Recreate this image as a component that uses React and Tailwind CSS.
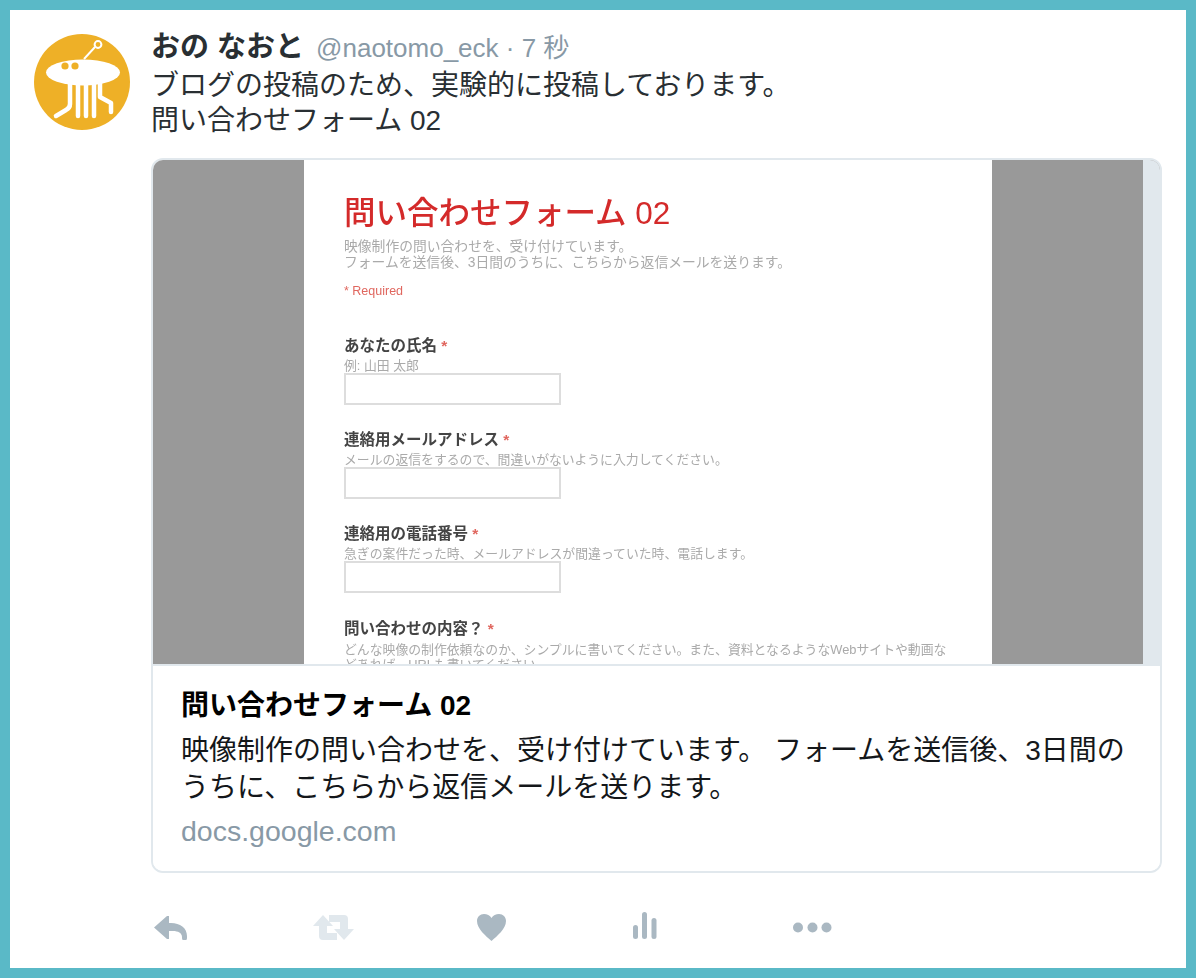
const fields = [
  {
    label: "連絡用メールアドレス",
    hint: "メールの返信をするので、間違いがないように入力してください。",
  },
  {
    label: "連絡用の電話番号",
    hint: "急ぎの案件だった時、メールアドレスが間違っていた時、電話します。",
  },
];

function Avatar() {
  return (
    <svg viewBox="0 0 96 96" className="h-[96px] w-[96px] shrink-0">
      <circle cx="48" cy="48" r="48" fill="#eeb027" />
      <ellipse cx="49" cy="38.500" rx="37" ry="13" fill="#fff" />
      <circle cx="31" cy="32" r="3.600" fill="#eeb027" />
      <circle cx="41" cy="32" r="3.600" fill="#eeb027" />
      <path d="M50 25L61 13" stroke="#fff" strokeWidth="2" />
      <circle cx="64" cy="10.500" r="3.400" fill="none" stroke="#fff" strokeWidth="2" />
      <g fill="none" stroke="#fff" strokeWidth="4.500" strokeLinecap="round" strokeLinejoin="round">
        <path d="M36 49V70Q36 74 32 76L22 82" />
        <path d="M44 49V82" />
        <path d="M52 49V82" />
        <path d="M60 49V82" />
        <path d="M66 49V63L77 69V78" />
      </g>
    </svg>
  );
}

function ReplyIcon() {
  return (
    <svg viewBox="0 0 33 24" className="h-[24px] w-[33px]">
      <path
        d="M0 11.500L13 0H15V7H17C26 7 33 12 33 20V22A2 2 0 0 1 28 22V21C28 17 24 15 19 15H15V23H13Z"
        fill="#aab8c2"
      />
    </svg>
  );
}

function RetweetIcon() {
  return (
    <svg viewBox="0 0 41 25" className="h-[25px] w-[41px]">
      <path
        d="M10 0L20 11H14V18H24V25H10A4 4 0 0 1 6 21V11H0Z M16 0H31A4 4 0 0 1 35 4V14H41L31 25L21 14H27V7H16Z"
        fill="#e1e8ed"
      />
    </svg>
  );
}

function HeartIcon() {
  return (
    <svg viewBox="0 0 29 27" className="h-[27px] w-[29px]">
      <path
        d="M14.500 27C9 22 0 15 0 7C0 3 3 0 7 0C10 0 13 1.500 14.500 4C16 1.500 19 0 22 0C26 0 29 3 29 7C29 15 20 22 14.500 27Z"
        fill="#aab8c2"
      />
    </svg>
  );
}

function BarsIcon() {
  return (
    <svg viewBox="0 0 25 27" className="h-[27px] w-[25px]" fill="#aab8c2">
      <rect x="0" y="13" width="5" height="14" rx="2.500" />
      <rect x="9" y="0" width="5" height="27" rx="2.500" />
      <rect x="18.500" y="6" width="5" height="21" rx="2.500" />
    </svg>
  );
}

function DotsIcon() {
  return (
    <svg viewBox="0 0 39 11" className="h-[11px] w-[39px]" fill="#aab8c2">
      <ellipse cx="5" cy="5.500" rx="5" ry="5" />
      <ellipse cx="19.500" cy="5.500" rx="5" ry="5" />
      <ellipse cx="33.500" cy="5.500" rx="5" ry="5" />
    </svg>
  );
}

function FormPreview() {
  return (
    <div className="flex h-[504px] w-full bg-[#999999]">
      <div className="w-[151px] shrink-0" />
      <div className="h-full w-[688px] shrink-0 overflow-hidden bg-white pl-[40px] pr-[40px] pt-[33px] blur-[0.7px]">
        <div className="text-[31.500px] font-medium leading-[40px] text-[#d42a2a]">問い合わせフォーム 02</div>
        <div className="mt-[6px] whitespace-nowrap text-[13.800px] leading-[16px] text-[#aaaaaa]">
          映像制作の問い合わせを、受け付けています。
          <br />
          フォームを送信後、3日間のうちに、こちらから返信メールを送ります。
        </div>
        <div className="mt-[12px] text-[12.500px] leading-[16px] text-[#e0675f]">* Required</div>
        <div className="mt-[37px] text-[15.500px] font-bold leading-[20px] text-[#444444]">
          あなたの氏名 <span className="text-[#e0675f]">*</span>
        </div>
        <div className="mt-[2px] h-[15px] text-[12.850px] leading-[16px] text-[#aaaaaa]">例: 山田 太郎</div>
        <div className="h-[32px] w-[217px] border-2 border-[#dddddd]" />
        {fields.map((field) => (
          <div key={field.label}>
            <div className="mt-[25px] text-[15.500px] font-bold leading-[20px] text-[#444444]">
              {field.label} <span className="text-[#e0675f]">*</span>
            </div>
            <div className="mt-[2px] h-[15px] whitespace-nowrap text-[12.850px] leading-[16px] text-[#aaaaaa]">
              {field.hint}
            </div>
            <div className="h-[32px] w-[217px] border-2 border-[#dddddd]" />
          </div>
        ))}
        <div className="mt-[26px] text-[15.500px] font-bold leading-[20px] text-[#444444]">
          問い合わせの内容？ <span className="text-[#e0675f]">*</span>
        </div>
        <div className="mt-[3px] whitespace-nowrap text-[12.850px] leading-[15px] text-[#aaaaaa]">
          どんな映像の制作依頼なのか、シンプルに書いてください。また、資料となるようなWebサイトや動画な
          <br />
          どあれば、URLも書いてください。
        </div>
      </div>
      <div className="w-[151px] shrink-0" />
      <div className="flex-1 bg-[#e1e8ed]" />
    </div>
  );
}

export default function App() {
  return (
    <div className="h-[978px] w-full overflow-hidden bg-[#5ab9c7] p-[10px] font-['Liberation_Sans','Noto_Sans_CJK_JP',sans-serif]">
      <div className="flex h-full gap-[21px] bg-white px-[24px] pt-[24px]">
        <Avatar />
        <div className="min-w-0 flex-1">
          {/* Header and tweet text */}
          <div className="-mt-[5px] flex items-baseline whitespace-nowrap leading-[36px]">
            <span className="text-[29px] font-bold text-[#292f33]">おの なおと</span>
            <span className="ml-[12px] text-[26px] text-[#8899a6]">@naotomo_eck · 7 秒</span>
          </div>
          <p className="mt-[2px] text-[28px] leading-[35px] text-[#292f33]">
            ブログの投稿のため、実験的に投稿しております。
            <br />
            問い合わせフォーム 02
          </p>

          {/* Link card */}
          <div className="mt-[20px] overflow-hidden rounded-[12px] border-2 border-[#e1e8ed]">
            <FormPreview />
            <div className="h-[207px] border-t-2 border-[#e1e8ed] bg-white px-[28px] pt-[20px]">
              <div className="text-[28px] font-bold leading-[40px] text-black">問い合わせフォーム 02</div>
              <p className="mt-[6px] text-[28px] leading-[37px] text-[#14171a]">
                映像制作の問い合わせを、受け付けています。 フォームを送信後、3日間のうちに、こちらから返信メールを送ります。
              </p>
              <div className="mt-[5px] text-[28.500px] leading-[40px] text-[#8899a6]">docs.google.com</div>
            </div>
          </div>

          {/* Actions */}
          <div className="mt-[39px] flex items-center">
            <div className="w-[162px] pl-[3px]">
              <ReplyIcon />
            </div>
            <div className="w-[164px]">
              <RetweetIcon />
            </div>
            <div className="w-[156px]">
              <HeartIcon />
            </div>
            <div className="mb-[4px] w-[160px]">
              <BarsIcon />
            </div>
            <div>
              <DotsIcon />
            </div>
          </div>
        </div>
      </div>
    </div>
  );
}
